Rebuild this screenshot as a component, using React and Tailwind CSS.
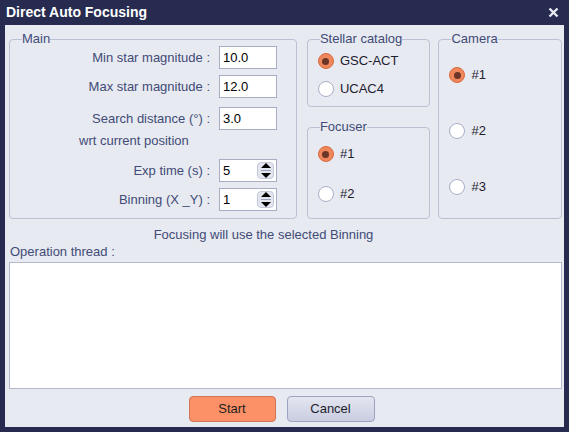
import React from 'react';

const font = { fontFamily: '"Liberation Sans", Arial, sans-serif' };

const Field = ({ label, value, spin }) => (
  <div className="flex items-center h-[23px]">
    <span className="w-[209px] pr-[9px] text-right text-[13px] text-[#424a78]">{label}</span>
    <div className="relative w-[58px] h-[23px] bg-white border border-[#a8adc4] flex items-center pl-[3px] text-[13px] text-black">
      {value}
      {spin && (
        <div className="absolute right-[2px] top-[2px] w-[17px] h-[17px] rounded-[4px] bg-[#e4e6ef] border border-[#c4c8da] flex flex-col items-center justify-center gap-[2px]">
          <div className="w-0 h-0 border-l-[5px] border-r-[5px] border-b-[5px] border-l-transparent border-r-transparent border-b-black" />
          <div className="w-[10px] h-[1px] bg-[#9aa0b8]" />
          <div className="w-0 h-0 border-l-[5px] border-r-[5px] border-t-[5px] border-l-transparent border-r-transparent border-t-black" />
        </div>
      )}
    </div>
  </div>
);

const Radio = ({ label, checked }) => (
  <div className="flex items-center h-[16px] gap-[6px] text-[13px] text-[#1e2030]">
    {checked ? (
      <div className="w-[16px] h-[16px] rounded-full bg-[#f0875c] border border-[#d9693e] flex items-center justify-center">
        <div className="w-[7px] h-[7px] rounded-full bg-[#6c3626]" />
      </div>
    ) : (
      <div className="w-[16px] h-[16px] rounded-full bg-white border border-[#a9aec8]" />
    )}
    <span>{label}</span>
  </div>
);

const Group = ({ title, className, children }) => (
  <fieldset className={`border border-[#bcc0d4] rounded-[4px] px-0 m-0 ${className}`}>
    <legend className="ml-[12px] px-0 text-[13px] leading-[14px] text-[#424a78]">{title}</legend>
    {children}
  </fieldset>
);

export default function App() {
  return (
    <div className="w-[569px] h-[432px] bg-[#262b4f] flex flex-col" style={font}>
      <div className="h-[25px] flex items-center justify-between pl-[6px] pr-[10px]">
        <span className="text-white font-bold text-[14px]">Direct Auto Focusing</span>
        <svg width="11" height="11" viewBox="0 0 11 11">
          <path d="M1.5 1.5 L9.5 9.5 M9.5 1.5 L1.5 9.5" stroke="#e8eaf2" strokeWidth="2.4" />
        </svg>
      </div>
      <div className="flex-1 ml-[5px] mr-[5px] mb-[5px] bg-[#e7eaf0] flex flex-col pl-[4px] pr-[2px] pt-[7px]">
        <div className="flex h-[187px]">
          <Group title="Main" className="w-[289px] h-[187px]">
            <div className="flex flex-col pt-0">
              <Field label="Min star magnitude :" value="10.0" />
              <div className="h-[6px]" />
              <Field label="Max star magnitude :" value="12.0" />
              <div className="h-[9px]" />
              <Field label="Search distance (°) :" value="3.0" />
              <div className="mt-[2px] h-[18px] flex items-center pl-[69px] text-[13px] text-[#424a78]">wrt current position</div>
              <div className="h-[9px]" />
              <Field label="Exp time (s) :" value="5" spin />
              <div className="h-[6px]" />
              <Field label="Binning (X _Y) :" value="1" spin />
            </div>
          </Group>
          <div className="ml-[10px] w-[124px] flex flex-col">
            <Group title="Stellar catalog" className="h-[75px]">
              <div className="flex flex-col gap-[12px] pl-[10px] pt-[7px]">
                <Radio label="GSC-ACT" checked />
                <Radio label="UCAC4" />
              </div>
            </Group>
            <Group title="Focuser" className="h-[99px] mt-[13px]">
              <div className="flex flex-col gap-[24px] pl-[10px] pt-[12px]">
                <Radio label="#1" checked />
                <Radio label="#2" />
              </div>
            </Group>
          </div>
          <Group title="Camera" className="ml-[8px] w-[124px] h-[187px]">
            <div className="flex flex-col gap-[40px] pl-[10px] pt-[21px]">
              <Radio label="#1" checked />
              <Radio label="#2" />
              <Radio label="#3" />
            </div>
          </Group>
        </div>
        <div className="mt-[7px] leading-[17px] text-center text-[13px] text-[#424a78] pr-[44px]">Focusing will use the selected Binning</div>
        <div className="mt-0 leading-[17px] text-[13px] text-[#424a78] pl-[1px]">Operation thread :</div>
        <div className="mt-[2px] h-[127px] bg-white border border-[#b4b8cc]" />
        <div className="flex justify-center gap-[11px] mt-[7px] pr-[8px]">
          <button className="w-[87px] h-[26px] rounded-[4px] bg-[#fc9167] border border-[#d07654] text-[13px] text-[#1e1e1e]">Start</button>
          <button className="w-[88px] h-[26px] rounded-[4px] bg-gradient-to-b from-[#e4e6f0] to-[#c9cde0] border border-[#9da3c2] text-[13px] text-[#1e1e2e]">Cancel</button>
        </div>
      </div>
    </div>
  );
}
